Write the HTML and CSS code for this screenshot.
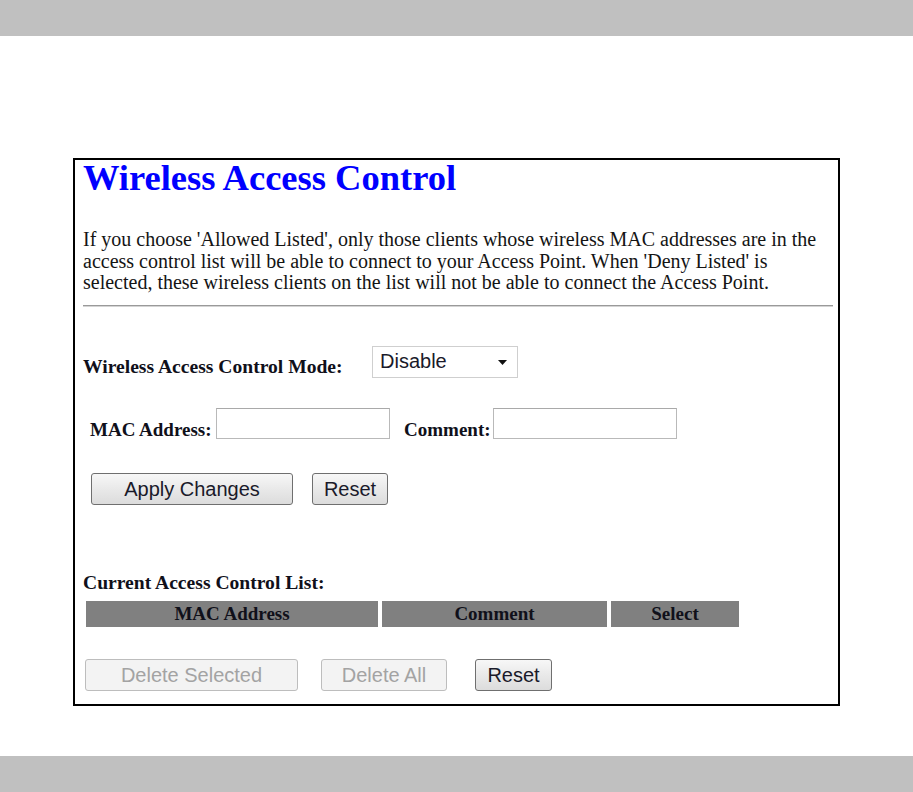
FILE: index.html
```html
<!DOCTYPE html>
<html>
<head>
<meta charset="utf-8">
<title>Wireless Access Control</title>
<link rel="stylesheet" href="styles.css">
</head>
<body>
<div class="bar"></div>
<main class="page">
  <form class="frame">
    <h1 class="title">Wireless Access Control</h1>
    <p class="intro">If you choose 'Allowed Listed', only those clients whose wireless MAC addresses are in the<br>access control list will be able to connect to your Access Point. When 'Deny Listed' is<br>selected, these wireless clients on the list will not be able to connect the Access Point.</p>
    <hr class="rule">
    <div class="row mode-row">
      <label class="lbl mode-lbl">Wireless Access Control Mode:</label>
      <div class="select">
        <span class="select-text">Disable</span>
        <svg class="caret" width="9" height="5" viewBox="0 0 9 5"><path d="M0 0H9L4.5 5Z" fill="#111"/></svg>
      </div>
    </div>
    <div class="row mac-row">
      <label class="lbl mac-lbl">MAC Address:</label>
      <input class="field mac-field" type="text">
      <label class="lbl cmt-lbl">Comment:</label>
      <input class="field cmt-field" type="text">
    </div>
    <div class="row btn-row">
      <button type="button" class="btn apply">Apply Changes</button>
      <button type="button" class="btn reset1">Reset</button>
    </div>
    <div class="lbl list-lbl">Current Access Control List:</div>
    <table class="list">
      <tr>
        <th class="c-mac">MAC Address</th>
        <th class="c-cmt">Comment</th>
        <th class="c-sel">Select</th>
      </tr>
    </table>
    <div class="row btn-row2">
      <button type="button" class="btn del-sel" disabled>Delete Selected</button>
      <button type="button" class="btn del-all" disabled>Delete All</button>
      <button type="button" class="btn reset2">Reset</button>
    </div>
  </form>
</main>
<div class="bar"></div>
</body>
</html>
```

FILE: styles.css
```css
html, body {
  margin: 0;
  padding: 0;
  background: #fff;
}
body {
  height: 792px;
  display: flex;
  flex-direction: column;
  font-family: "Liberation Serif", "Times New Roman", serif;
  color: #111;
}
.bar {
  height: 36px;
  background: #c0c0c0;
  flex: none;
}
.page {
  flex: 1;
  padding-top: 122px;
}
.frame {
  margin: 0 0 0 73px;
  width: 767px;
  height: 548px;
  box-sizing: border-box;
  border: 2px solid #000;
  padding: 0 5px 0 8px;
}
.title {
  margin: 0;
  font-size: 36.5px;
  line-height: 36px;
  font-weight: bold;
  color: #0000ff;
}
.intro {
  margin: 33px 0 0;
  font-size: 20px;
  line-height: 21.5px;
  white-space: nowrap;
  color: #141414;
}
.rule {
  margin: 11px 0 0;
  height: 0;
  border: 0;
  border-top: 1px solid #9a9a9a;
  border-bottom: 1px solid #d4d4d4;
  width: 750px;
}
.row {
  display: flex;
  align-items: flex-start;
}
.lbl {
  font-size: 19px;
  line-height: 22px;
  font-weight: bold;
  color: #10101a;
  white-space: nowrap;
}
.mode-row {
  margin-top: 39px;
  height: 32px;
}
.mode-lbl {
  width: 289px;
  margin-top: 10px;
  flex: none;
  font-size: 19.6px;
}
.select {
  width: 146px;
  height: 32px;
  box-sizing: border-box;
  border: 1px solid #cfcfcf;
  display: flex;
  align-items: center;
  justify-content: space-between;
  padding: 0 10px 0 7px;
  font-family: "Liberation Sans", Arial, sans-serif;
  font-size: 20px;
  color: #1a1a2a;
}
.caret {
  margin-top: 1px;
}
.mac-row {
  margin-top: 30px;
  padding-left: 7px;
  height: 31px;
}
.mac-lbl {
  width: 126px;
  margin-top: 11px;
  flex: none;
}
.cmt-lbl {
  width: 89px;
  margin: 11px 0 0 14px;
  flex: none;
}
.field {
  height: 31px;
  box-sizing: border-box;
  border: 1px solid #b9b9b9;
  border-top-color: #a9a9a9;
  background: #fff;
  margin: 0;
  padding: 0 4px;
  font-family: "Liberation Sans", Arial, sans-serif;
  font-size: 16px;
}
.mac-field {
  width: 174px;
}
.cmt-field {
  width: 184px;
}
.btn {
  height: 32px;
  box-sizing: border-box;
  margin: 0;
  padding: 0;
  border: 1px solid #6f6f6f;
  border-radius: 3px;
  background: linear-gradient(#f7f7f7, #e9e9e9 50%, #dcdcdc);
  font-family: "Liberation Sans", Arial, sans-serif;
  font-size: 20px;
  line-height: 28px;
  color: #1a1a2a;
  text-align: center;
}
.btn:disabled {
  border-color: #bdbdbd;
  background: #f3f3f3;
  color: #a3a3a3;
}
.btn-row {
  margin-top: 34px;
  padding-left: 8px;
}
.apply {
  width: 202px;
}
.reset1 {
  width: 76px;
  margin-left: 19px;
}
.list-lbl {
  margin-top: 67px;
  font-size: 19.6px;
}
.list {
  margin: 7px 0 0 -1px;
  border-collapse: separate;
  border-spacing: 4px 0;
}
.list th {
  height: 25px;
  padding: 1px 0 0;
  background: #808080;
  font-size: 19px;
  line-height: 22px;
  font-weight: bold;
  color: #10101a;
  text-align: center;
}
.c-mac { width: 292px; }
.c-cmt { width: 225px; }
.c-sel { width: 128px; }
.btn-row2 {
  margin-top: 32px;
  padding-left: 2px;
}
.del-sel {
  width: 213px;
}
.del-all {
  width: 126px;
  margin-left: 23px;
}
.reset2 {
  width: 77px;
  margin-left: 28px;
}
```
